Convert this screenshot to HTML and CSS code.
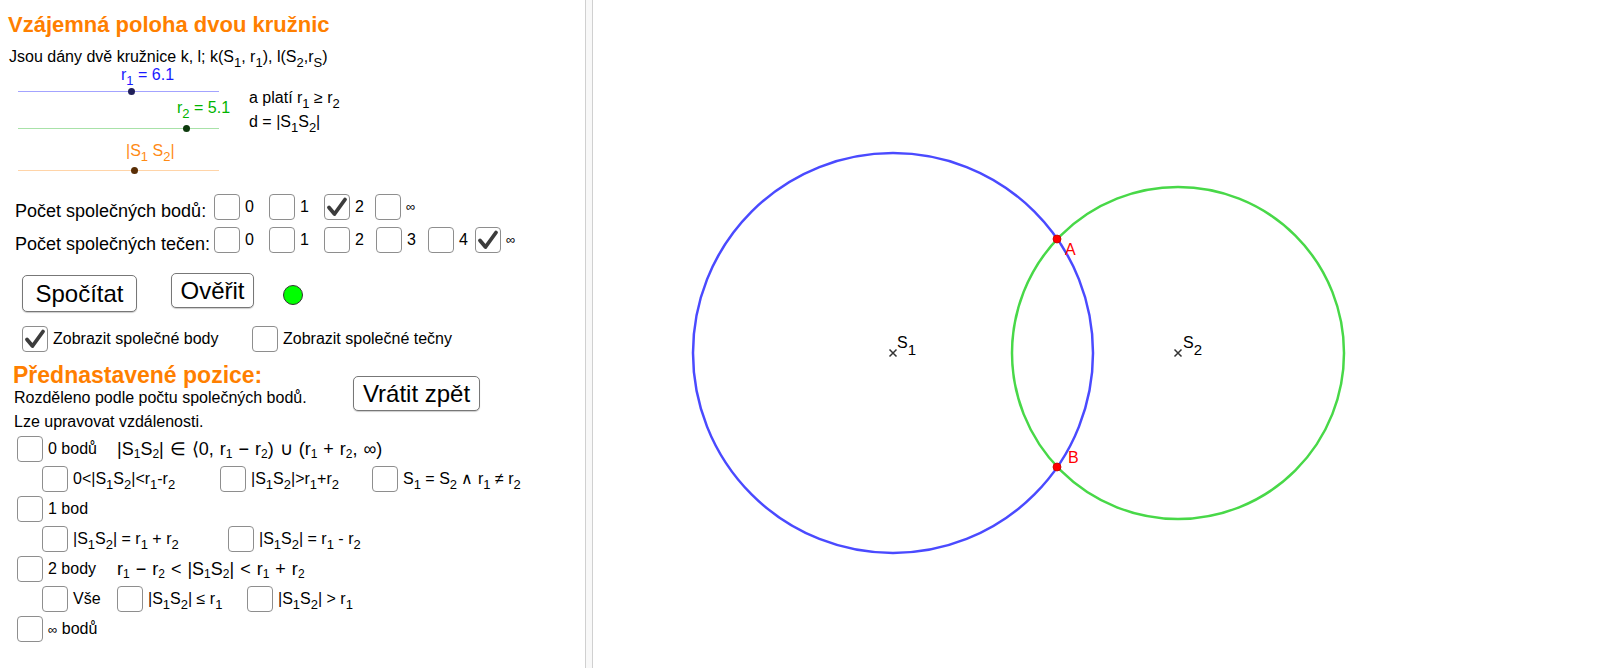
FILE: index.html
```html
<!DOCTYPE html>
<html lang="cs">
<head>
  <meta charset="UTF-8">
  <title>Vzájemná poloha dvou kružnic</title>
  <link rel="stylesheet" href="styles.css">
</head>
<body>
  <div class="applet">
    <div class="panel">
      <h1 class="title">Vzájemná poloha dvou kružnic</h1>
      <p class="intro">Jsou dány dvě kružnice k, l; k(S<span class="sub">1</span>, r<span class="sub">1</span>), l(S<span class="sub">2</span>,r<span class="sub">S</span>)</p>

      <div class="sliders">
        <div class="tracks">
          <div class="slider s1">
            <div class="slider-label">r<span class="sub">1</span> = 6.1</div>
            <div class="track"><span class="knob" style="left: 113px"></span></div>
          </div>
          <div class="slider s2">
            <div class="slider-label">r<span class="sub">2</span> = 5.1</div>
            <div class="track"><span class="knob" style="left: 168px"></span></div>
          </div>
          <div class="slider s3">
            <div class="slider-label">|S<span class="sub">1</span> S<span class="sub">2</span>|</div>
            <div class="track"><span class="knob" style="left: 116px"></span></div>
          </div>
        </div>
        <div class="note">
          <div>a platí r<span class="sub">1</span> ≥ r<span class="sub">2</span></div>
          <div>d = |S<span class="sub">1</span>S<span class="sub">2</span>|</div>
        </div>
      </div>

      <div class="count-row first">
        <span class="count-label">Počet společných bodů:</span>
        <div class="opts opts-points">
          <label class="opt"><span class="cb"></span><span>0</span></label>
          <label class="opt"><span class="cb"></span><span>1</span></label>
          <label class="opt"><span class="cb on"><svg viewBox="0 0 24 24"><path d="M4 12.5 L9.5 19 L20 4.5"/></svg></span><span>2</span></label>
          <label class="opt"><span class="cb"></span><span class="inf">∞</span></label>
        </div>
      </div>
      <div class="count-row">
        <span class="count-label">Počet společných tečen:</span>
        <div class="opts opts-tangents">
          <label class="opt"><span class="cb"></span><span>0</span></label>
          <label class="opt"><span class="cb"></span><span>1</span></label>
          <label class="opt"><span class="cb"></span><span>2</span></label>
          <label class="opt"><span class="cb"></span><span>3</span></label>
          <label class="opt"><span class="cb"></span><span>4</span></label>
          <label class="opt"><span class="cb on"><svg viewBox="0 0 24 24"><path d="M4 12.5 L9.5 19 L20 4.5"/></svg></span><span class="inf">∞</span></label>
        </div>
      </div>

      <div class="actions">
        <button class="btn btn-calc">Spočítat</button>
        <button class="btn btn-check">Ověřit</button>
        <span class="status"></span>
      </div>

      <div class="show-row">
        <label class="opt show-points"><span class="cb on"><svg viewBox="0 0 24 24"><path d="M4 12.5 L9.5 19 L20 4.5"/></svg></span><span>Zobrazit společné body</span></label>
        <label class="opt"><span class="cb"></span><span>Zobrazit společné tečny</span></label>
      </div>

      <div class="presets">
        <div class="presets-text">
          <h2>Přednastavené pozice:</h2>
          <p>Rozděleno podle počtu společných bodů.</p>
          <p>Lze upravovat vzdálenosti.</p>
        </div>
        <button class="btn btn-undo">Vrátit zpět</button>
      </div>

      <div class="cases">
        <div class="case case-main">
          <label class="opt"><span class="cb"></span><span>0 bodů</span></label>
          <span class="formula">|S<span class="fsub">1</span>S<span class="fsub">2</span>| ∈ ⟨0, r<span class="fsub">1</span> − r<span class="fsub">2</span>) ∪ (r<span class="fsub">1</span> + r<span class="fsub">2</span>, ∞)</span>
        </div>
        <div class="case case-zero">
          <label class="opt"><span class="cb"></span><span>0&lt;|S<span class="sub">1</span>S<span class="sub">2</span>|&lt;r<span class="sub">1</span>-r<span class="sub">2</span></span></label>
          <label class="opt"><span class="cb"></span><span>|S<span class="sub">1</span>S<span class="sub">2</span>|&gt;r<span class="sub">1</span>+r<span class="sub">2</span></span></label>
          <label class="opt"><span class="cb"></span><span>S<span class="sub">1</span> = S<span class="sub">2</span> ∧ r<span class="sub">1</span> ≠ r<span class="sub">2</span></span></label>
        </div>
        <div class="case case-main">
          <label class="opt"><span class="cb"></span><span>1 bod</span></label>
        </div>
        <div class="case case-one">
          <label class="opt"><span class="cb"></span><span>|S<span class="sub">1</span>S<span class="sub">2</span>| = r<span class="sub">1</span> + r<span class="sub">2</span></span></label>
          <label class="opt"><span class="cb"></span><span>|S<span class="sub">1</span>S<span class="sub">2</span>| = r<span class="sub">1</span> - r<span class="sub">2</span></span></label>
        </div>
        <div class="case case-main">
          <label class="opt"><span class="cb"></span><span>2 body</span></label>
          <span class="formula">r<span class="fsub">1</span> − r<span class="fsub">2</span> &lt; |S<span class="fsub">1</span>S<span class="fsub">2</span>| &lt; r<span class="fsub">1</span> + r<span class="fsub">2</span></span>
        </div>
        <div class="case case-two">
          <label class="opt"><span class="cb"></span><span>Vše</span></label>
          <label class="opt"><span class="cb"></span><span>|S<span class="sub">1</span>S<span class="sub">2</span>| ≤ r<span class="sub">1</span></span></label>
          <label class="opt"><span class="cb"></span><span>|S<span class="sub">1</span>S<span class="sub">2</span>| &gt; r<span class="sub">1</span></span></label>
        </div>
        <div class="case case-main">
          <label class="opt"><span class="cb"></span><span><span class="inf">∞</span> bodů</span></label>
        </div>
      </div>
    </div>

    <div class="splitter"></div>

    <div class="board">
      <svg width="1007" height="668" viewBox="0 0 1007 668">
        <circle cx="300" cy="353" r="200" fill="none" stroke="#4a4aff" stroke-width="2.5"/>
        <circle cx="585" cy="353" r="166" fill="none" stroke="#48d848" stroke-width="2.5"/>
        <!-- centres -->
        <path d="M296.5 349.5 L303.5 356.5 M303.5 349.5 L296.5 356.5" stroke="#333" stroke-width="1.5"/>
        <path d="M581.5 349.5 L588.5 356.5 M588.5 349.5 L581.5 356.5" stroke="#333" stroke-width="1.5"/>
        <text class="lbl" x="304" y="348">S<tspan dy="7" font-size="15">1</tspan></text>
        <text class="lbl" x="590" y="348">S<tspan dy="7" font-size="15">2</tspan></text>
        <!-- intersections -->
        <circle cx="464" cy="239" r="4" fill="#ff0000" stroke="#c00000" stroke-width="0.8"/>
        <circle cx="464" cy="467" r="4" fill="#ff0000" stroke="#c00000" stroke-width="0.8"/>
        <text class="lbl red" x="472" y="255">A</text>
        <text class="lbl red" x="475" y="463">B</text>
      </svg>
    </div>
  </div>
</body>
</html>
```

FILE: styles.css
```css
body {
  margin: 0;
  background: #fff;
  color: #000;
  font-family: "Liberation Sans", Arial, sans-serif;
}
.applet {
  display: flex;
  width: 1600px;
  height: 668px;
  overflow: hidden;
}
.panel {
  width: 585px;
  flex: none;
  font-size: 16px;
}
.splitter {
  width: 6px;
  flex: none;
  background: #f8f8f8;
  border-left: 1px solid #d0d0d0;
  border-right: 1px solid #d0d0d0;
}
.board {
  flex: 1;
}
.board svg {
  display: block;
}
.lbl {
  font-family: "Liberation Sans", Arial, sans-serif;
  font-size: 16px;
  fill: #000;
}
.lbl.red {
  fill: #ff0000;
}

.title {
  margin: 12px 0 0 8px;
  font-size: 22px;
  line-height: 26px;
  font-weight: bold;
  color: #ff7f00;
}
.intro {
  margin: 10px 0 0 9px;
  line-height: 18px;
}
.sub {
  font-size: 13px;
  vertical-align: -5px;
  line-height: 0;
}
.fsub {
  font-size: 12px;
  vertical-align: -3px;
  line-height: 0;
}
.inf {
  font-size: 13px;
}

/* sliders */
.sliders {
  display: flex;
  margin-top: 1px;
}
.tracks {
  width: 201px;
  margin-left: 18px;
}
.slider-label {
  line-height: 16px;
  white-space: nowrap;
}
.track {
  position: relative;
  height: 1px;
}
.knob {
  position: absolute;
  top: -3px;
  width: 7px;
  height: 7px;
  margin-left: -3.5px;
  border-radius: 50%;
}
.s1 .slider-label { padding-left: 103px; color: #1a1aff; }
.s1 .track { margin-top: 8px; background: #a3a3ff; }
.s1 .knob { background: #20205a; }
.s2 .slider-label { margin-top: 8px; padding-left: 159px; color: #00b400; }
.s2 .track { margin-top: 12px; background: #a8e2a8; }
.s2 .knob { background: #0d3a0d; }
.s3 .slider-label { margin-top: 14px; padding-left: 108px; color: #ff8a14; }
.s3 .track { margin-top: 11px; background: #ffd4a8; }
.s3 .knob { background: #5a2e05; }
.note {
  margin: 19px 0 0 30px;
  line-height: 24px;
}

/* checkboxes */
.opt {
  display: flex;
  align-items: center;
  gap: 5px;
  line-height: 20px;
  white-space: nowrap;
}
.cb {
  display: flex;
  align-items: center;
  justify-content: center;
  flex: none;
  width: 26px;
  height: 26px;
  box-sizing: border-box;
  border: 1px solid #8e8e8e;
  border-radius: 4px;
  background: #fff;
}
.cb svg {
  width: 24px;
  height: 24px;
}
.cb path {
  fill: none;
  stroke: #3c3c3c;
  stroke-width: 3.8;
  stroke-linecap: round;
  stroke-linejoin: round;
}

.count-row {
  display: flex;
  align-items: center;
  height: 26px;
  margin-top: 7px;
}
.count-row.first {
  margin-top: 23px;
}
.count-label {
  width: 196px;
  padding: 8px 3px 0 15px;
  font-size: 18px;
  white-space: nowrap;
}
.opts {
  display: grid;
  align-items: center;
}
.opts-points {
  grid-template-columns: 55px 55px 51px auto;
}
.opts-tangents {
  grid-template-columns: 55px 55px 52px 52px 47px auto;
}

/* buttons */
.actions {
  display: flex;
  align-items: flex-start;
  margin: 20px 0 0 22px;
}
.btn {
  padding: 0;
  font-family: "Liberation Sans", Arial, sans-serif;
  font-size: 24px;
  color: #000;
  background: #fff;
  border: 1px solid #777;
  border-radius: 5px;
  box-shadow: 0 1px 1px rgba(0, 0, 0, 0.2);
}
.btn-calc {
  width: 115px;
  height: 37px;
  margin-top: 2px;
}
.btn-check {
  width: 83px;
  height: 35px;
  margin-left: 34px;
}
.status {
  width: 20px;
  height: 20px;
  box-sizing: border-box;
  margin: 12px 0 0 29px;
  border: 1px solid #333;
  border-radius: 50%;
  background: #00ff00;
}

.show-row {
  display: flex;
  height: 26px;
  margin: 14px 0 0 22px;
}
.show-points {
  width: 230px;
}

/* presets */
.presets {
  display: flex;
  margin-top: 12px;
}
.presets-text {
  width: 340px;
  padding-left: 13px;
}
.presets h2 {
  margin: 0;
  font-size: 23px;
  line-height: 22px;
  color: #ff7f00;
}
.presets p {
  margin: 0 0 0 1px;
  line-height: 24px;
}
.btn-undo {
  width: 127px;
  height: 35px;
  margin-top: 12px;
}

.cases {
  display: flex;
  flex-direction: column;
  gap: 4px;
  margin-top: 2px;
}
.case {
  display: grid;
  align-items: center;
  height: 26px;
}
.case-main {
  padding-left: 17px;
  grid-template-columns: 100px auto;
}
.case-zero {
  padding-left: 42px;
  grid-template-columns: 178px 152px auto;
}
.case-one {
  padding-left: 42px;
  grid-template-columns: 186px auto;
}
.case-two {
  padding-left: 42px;
  grid-template-columns: 75px 130px auto;
}
.formula {
  font-size: 18px;
  word-spacing: 1px;
  white-space: nowrap;
}
```
